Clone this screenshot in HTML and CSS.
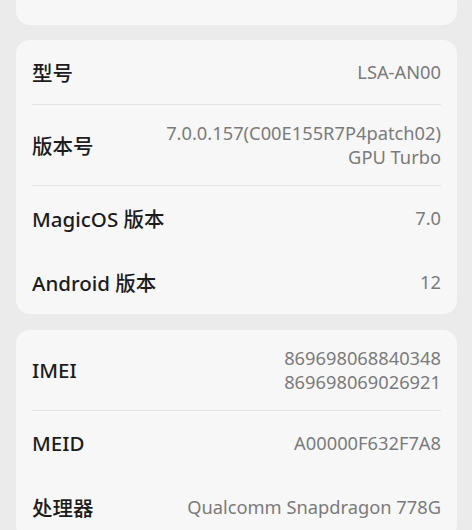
FILE: index.html
```html
<!DOCTYPE html>
<html>
    <head>
        <meta charset="utf-8">
        <title>关于手机</title>
        <link rel="stylesheet" href="styles.css">
    </head>
    <body>
        <div id="page">
            <div class="card top-card"></div>

            <div class="card">
                <div class="row line">
                    <span class="label">型号</span>
                    <span class="value">LSA-AN00</span>
                </div>
                <div class="row tall line">
                    <span class="label">版本号</span>
                    <span class="value">7.0.0.157(C00E155R7P4patch02)<br>GPU Turbo</span>
                </div>
                <div class="row">
                    <span class="label">MagicOS 版本</span>
                    <span class="value">7.0</span>
                </div>
                <div class="row">
                    <span class="label">Android 版本</span>
                    <span class="value">12</span>
                </div>
            </div>

            <div class="card">
                <div class="row tall line">
                    <span class="label">IMEI</span>
                    <span class="value">869698068840348<br>869698069026921</span>
                </div>
                <div class="row">
                    <span class="label">MEID</span>
                    <span class="value">A00000F632F7A8</span>
                </div>
                <div class="row">
                    <span class="label">处理器</span>
                    <span class="value">Qualcomm Snapdragon 778G</span>
                </div>
            </div>
        </div>
    </body>
</html>
```

FILE: styles.css
```css
body{
    margin: 0;
    background-color: #ebebeb;
    font-family: "Noto Sans", "Noto Sans CJK SC", sans-serif;
    overflow: hidden;
}
#page{
    display: flex;
    flex-direction: column;
    gap: 16px;
    padding: 0 15px 0 16px;
}
.card{
    background-color: #f7f7f7;
    border-radius: 14px;
}
.top-card{
    height: 64px;
    margin-top: -39px;
    margin-bottom: -1px;
}
.row{
    display: flex;
    align-items: center;
    justify-content: space-between;
    min-height: 64px;
    margin: 0 16px;
}
.row.tall{
    min-height: 80px;
}
.row.line{
    border-bottom: 1px solid #e4e4e4;
}
.label{
    font-size: 20.5px;
    font-weight: 500;
    color: #1c1c1c;
}
.value{
    font-size: 18.3px;
    line-height: 24.5px;
    color: #7b7b7b;
    text-align: right;
}
```
